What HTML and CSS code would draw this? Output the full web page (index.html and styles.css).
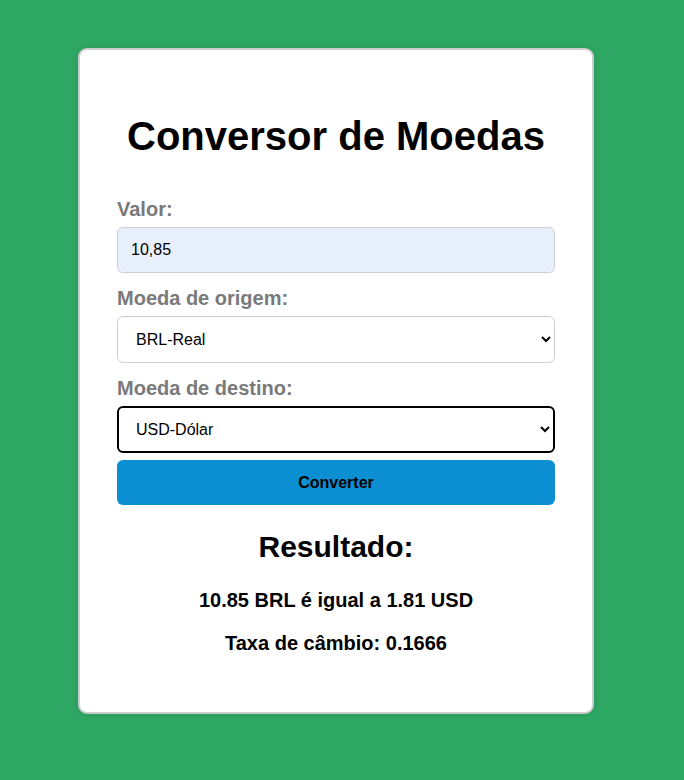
FILE: index.html
```html
<!DOCTYPE html>
<html lang="pt-BR">
<head>
<meta charset="utf-8">
<title>Conversor de Moedas</title>
<link rel="stylesheet" href="styles.css">
</head>
<body>
<div class="card">
  <h1 class="title">Conversor de Moedas</h1>
  <form class="form">
    <label class="label" for="valor">Valor:</label>
    <input class="field field-filled" id="valor" type="text" value="10,85">
    <label class="label gap" for="origem">Moeda de origem:</label>
    <select class="field" id="origem">
      <option selected>BRL-Real</option>
      <option>USD-Dólar</option>
      <option>EUR-Euro</option>
    </select>
    <label class="label gap" for="destino">Moeda de destino:</label>
    <select class="field field-focus" id="destino">
      <option>BRL-Real</option>
      <option selected>USD-Dólar</option>
      <option>EUR-Euro</option>
    </select>
    <button class="btn" type="button">Converter</button>
  </form>
  <div class="result">
    <h2 class="result-title">Resultado:</h2>
    <p class="result-line">10.85 BRL é igual a 1.81 USD</p>
    <p class="result-line rate">Taxa de câmbio: 0.1666</p>
  </div>
</div>
</body>
</html>
```

FILE: styles.css
```css
html, body {
  margin: 0;
  padding: 0;
}
body {
  background: #30a865;
  font-family: "Liberation Sans", Arial, sans-serif;
  min-height: 780px;
  padding-top: 48px;
  box-sizing: border-box;
}
.card {
  box-sizing: border-box;
  width: 516px;
  height: 666px;
  margin-left: 78px;
  background: #fff;
  border: 2px solid #cdcdcd;
  border-radius: 9px;
  box-shadow: 0 0 10px rgba(0,0,0,0.12);
  padding: 37px 37px;
}
.title {
  margin: 26px 0 39px;
  font-size: 40px;
  line-height: 46px;
  font-weight: bold;
  text-align: center;
  color: #000;
}
.form {
  display: flex;
  flex-direction: column;
}
.label {
  font-size: 20px;
  line-height: 23px;
  font-weight: bold;
  color: #7a7a7a;
  margin-bottom: 6px;
}
.label.gap {
  margin-top: 14px;
}
.field {
  box-sizing: border-box;
  width: 100%;
  height: 47px;
  font-family: "Liberation Sans", Arial, sans-serif;
  font-size: 16px;
  color: #000;
  background: #fff;
  border: 1px solid #cfcfcf;
  border-radius: 6px;
  padding: 0 12px 0 14px;
  outline: none;
}
.field-filled {
  height: 46px;
  background: #e8f0fe;
  padding-left: 13px;
}
.field-focus {
  border: 2px solid #000;
  padding-left: 13px;
}
.btn {
  margin-top: 7px;
  height: 45px;
  border: none;
  border-radius: 6px;
  background: #0b8ed2;
  color: #000;
  font-family: "Liberation Sans", Arial, sans-serif;
  font-size: 16px;
  font-weight: bold;
}
.result {
  text-align: center;
}
.result-title {
  margin: 25px 0 0;
  font-size: 30px;
  line-height: 34px;
  font-weight: bold;
}
.result-line {
  margin: 25px 0 0;
  font-size: 20px;
  line-height: 23px;
  font-weight: bold;
}
.result-line.rate {
  margin-top: 20px;
}
```
